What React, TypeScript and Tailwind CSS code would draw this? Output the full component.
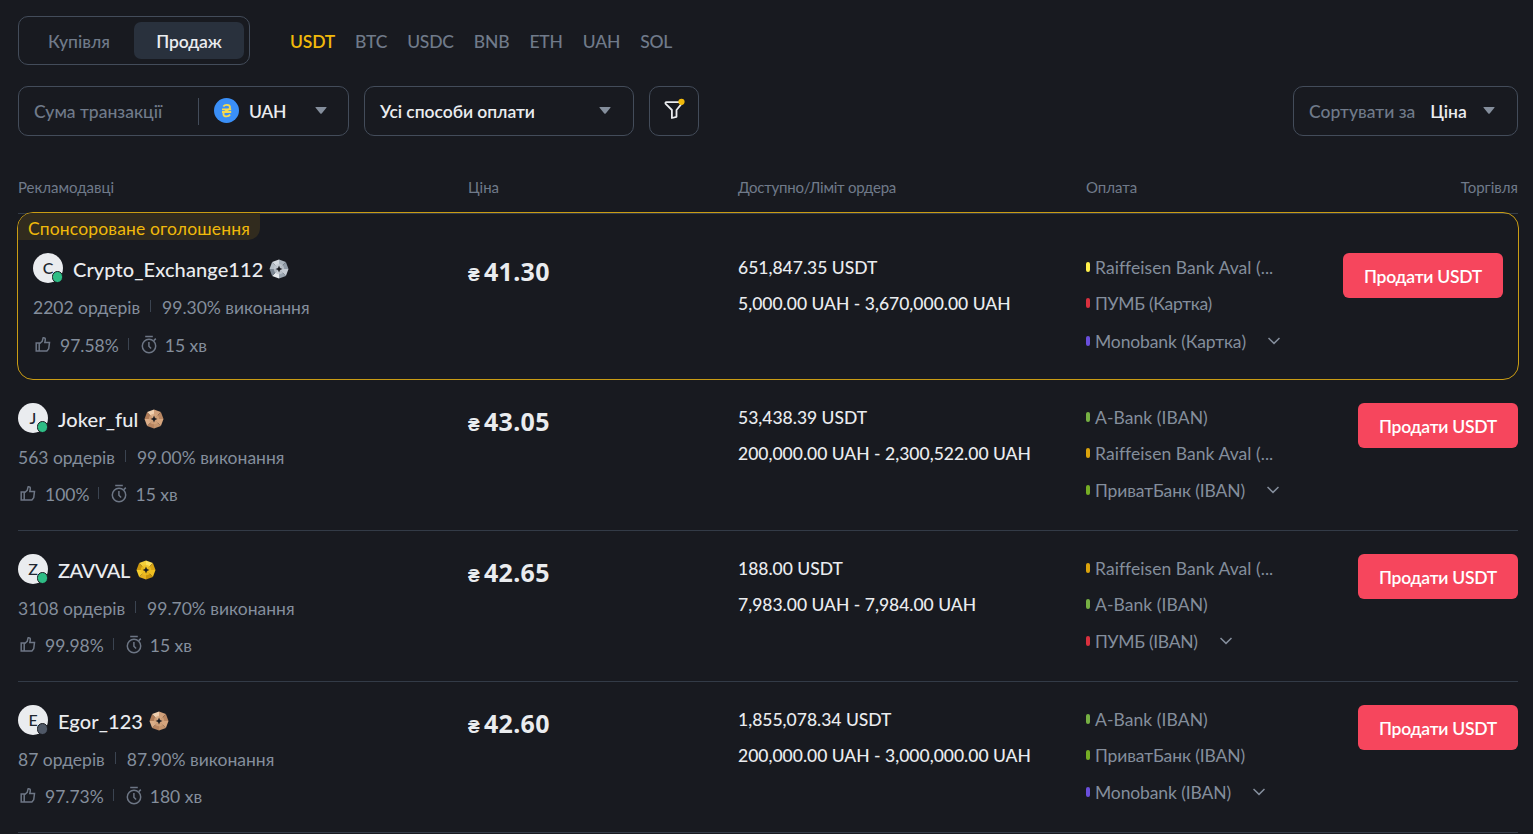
import clsx from "clsx";

type Tier = "silver" | "bronze" | "gold";

type Offer = {
  name: string;
  tier: Tier;
  online: boolean;
  orders: string;
  completion: string;
  rating: string;
  time: string;
  price: string;
  available: string;
  limit: string;
  methods: { label: string; color: string }[];
  sponsored?: boolean;
};

const coins = ["USDT", "BTC", "USDC", "BNB", "ETH", "UAH", "SOL"];

const offers: Offer[] = [
  {
    name: "Crypto_Exchange112",
    tier: "silver",
    online: true,
    orders: "2202 ордерів",
    completion: "99.30% виконання",
    rating: "97.58%",
    time: "15 хв",
    price: "41.30",
    available: "651,847.35 USDT",
    limit: "5,000.00 UAH - 3,670,000.00 UAH",
    methods: [
      { label: "Raiffeisen Bank Aval (...", color: "bg-[#fff04b]" },
      { label: "ПУМБ (Картка)", color: "bg-[#d9303e]" },
      { label: "Monobank (Картка)", color: "bg-[#6a4fdc]" },
    ],
    sponsored: true,
  },
  {
    name: "Joker_ful",
    tier: "bronze",
    online: true,
    orders: "563 ордерів",
    completion: "99.00% виконання",
    rating: "100%",
    time: "15 хв",
    price: "43.05",
    available: "53,438.39 USDT",
    limit: "200,000.00 UAH - 2,300,522.00 UAH",
    methods: [
      { label: "A-Bank (IBAN)", color: "bg-[#76b043]" },
      { label: "Raiffeisen Bank Aval (...", color: "bg-[#dba30c]" },
      { label: "ПриватБанк (IBAN)", color: "bg-[#75ad24]" },
    ],
  },
  {
    name: "ZAVVAL",
    tier: "gold",
    online: true,
    orders: "3108 ордерів",
    completion: "99.70% виконання",
    rating: "99.98%",
    time: "15 хв",
    price: "42.65",
    available: "188.00 USDT",
    limit: "7,983.00 UAH - 7,984.00 UAH",
    methods: [
      { label: "Raiffeisen Bank Aval (...", color: "bg-[#dba30c]" },
      { label: "A-Bank (IBAN)", color: "bg-[#76b043]" },
      { label: "ПУМБ (IBAN)", color: "bg-[#d9303e]" },
    ],
  },
  {
    name: "Egor_123",
    tier: "bronze",
    online: false,
    orders: "87 ордерів",
    completion: "87.90% виконання",
    rating: "97.73%",
    time: "180 хв",
    price: "42.60",
    available: "1,855,078.34 USDT",
    limit: "200,000.00 UAH - 3,000,000.00 UAH",
    methods: [
      { label: "A-Bank (IBAN)", color: "bg-[#76b043]" },
      { label: "ПриватБанк (IBAN)", color: "bg-[#75ad24]" },
      { label: "Monobank (IBAN)", color: "bg-[#6a4fdc]" },
    ],
  },
];

// Facet shades, clockwise from the top
const facets: Record<Tier, string[]> = {
  silver: ["#a9b3bd", "#8f9aa6", "#c3cad2", "#9aa5b0", "#e6eaee", "#7c8793", "#b4bdc6", "#d3d9df"],
  bronze: ["#d0a07a", "#b98762", "#d6a57d", "#c4946d", "#b98560", "#dcae88", "#b07c58", "#f0cfae"],
  gold: ["#fbe05e", "#d9a514", "#f0c020", "#c9940a", "#e5b020", "#f5cc2c", "#cc980e", "#f3cf3a"],
};

const rim = [
  [10, 0.5], [16.9, 3.1], [19.5, 10], [16.9, 16.9], [10, 19.5], [3.1, 16.9], [0.5, 10], [3.1, 3.1],
];

function labelTracking(label: string) {
  if (label.startsWith("Raiffeisen")) return "tracking-[0.05px]";
  if (label.startsWith("ПУМБ")) return "tracking-[-0.3px]";
  if (label.startsWith("A-Bank")) return "tracking-[0.07px]";
  return "tracking-[-0.12px]";
}

function TierGem({ tier }: { tier: Tier }) {
  return (
    <svg className="size-5" viewBox="0 0 20 20">
      {rim.map(([x, y], i) => {
        const [nx, ny] = rim[(i + 1) % rim.length];
        return <polygon key={i} points={`10,10 ${x},${y} ${nx},${ny}`} fill={facets[tier][i]} />;
      })}
      <circle cx="10" cy="10" r="5.2" fill={facets[tier][2]} opacity="0.75" />
      <path d="M10 6.6l1 2.4 2.4 1-2.4 1-1 2.4-1-2.4-2.4-1 2.4-1z" fill="#181a20" />
    </svg>
  );
}

function ThumbUp() {
  return (
    <svg className="h-[17px] w-4" viewBox="0 0 16 17" fill="none" stroke="currentColor" strokeWidth="1.5">
      <path d="M1.2 7h3v8h-3zM4.2 8l3-2.6.9-3.6c1.6-.3 2.4.6 2.2 2L9.8 6.6h4.7l-.8 6.2-1.8 2.2H4.2" />
    </svg>
  );
}

function Stopwatch() {
  return (
    <svg className="h-[19px] w-4" viewBox="0 0 16 19" fill="none" stroke="currentColor" strokeWidth="1.5">
      <circle cx="8" cy="11" r="6.7" />
      <path d="M4.2 1.4h7.6M12.8 5.6l2-2M7.9 7v4.2l2.2 2.3" />
    </svg>
  );
}

function HryvniaCoin() {
  return (
    <svg className="mb-px ml-[15px] size-[25px]" viewBox="0 0 25 25" fill="none">
      <circle cx="12.5" cy="12.5" r="12.5" fill="#3a8ff7" />
      <path
        d="M9.3 8.6c.8-1.2 2-1.8 3.5-1.8 2 0 3.2 1 3.2 2.5 0 3.6-6.6 2.9-6.6 6.6 0 1.5 1.2 2.5 3.2 2.5 1.6 0 2.8-.7 3.5-1.9M8 11.3h9.2M8 14h9.2"
        stroke="#f5d94e"
        strokeWidth="1.8"
      />
    </svg>
  );
}

function Caret() {
  return (
    <svg className="mb-px h-[7px] w-3" viewBox="0 0 12 7" fill="#848e9c">
      <path d="M1 0h10q1 0 .4.8L6.7 6.5q-.7.7-1.4 0L.6.8Q0 0 1 0z" />
    </svg>
  );
}

function OfferRow({ offer }: { offer: Offer }) {
  return (
    <div
      className={clsx(
        "relative flex items-start",
        offer.sponsored
          ? "-mx-px -mt-0.5 h-[168px] rounded-[16px] border border-[#c99c14] px-[15px] pt-10"
          : "h-[151px] border-b border-[#333b47] pt-[23px]",
      )}
    >
      {offer.sponsored && (
        <div className="absolute left-0 top-0 h-[27px] w-[242px] rounded-br-[12px] rounded-tl-[15px] bg-[#312b1e] pl-2.5 text-[17.5px] leading-[31px] tracking-[0.15px] text-[#f0b90b]">
          Спонсороване оголошення
        </div>
      )}

      <div className={offer.sponsored ? "w-[435px]" : "w-[450px]"}>
        <div className="flex h-[34px] items-start">
          <div className="relative size-[30px] shrink-0 rounded-full bg-[#eaecef] text-center text-base font-medium leading-[30px] text-[#202630]">
            {offer.name[0]}
            <span
              className={clsx(
                "absolute bottom-0 right-0 h-3 w-[11px] rounded-full border border-[#181a20]",
                offer.online ? "bg-[#2ebd85]" : "bg-[#4f5867]",
              )}
            />
          </div>
          <span
            className={clsx(
              "ml-2.5 mr-1.5 text-[20px] font-medium leading-[33px] text-[#eaecef]",
              offer.tier === "gold" ? "tracking-[-0.5px]" : "tracking-[0.1px]",
            )}
          >
            {offer.name}
          </span>
          <span className="mt-1.5">
            <TierGem tier={offer.tier} />
          </span>
        </div>
        <div className="mt-2.5 flex h-[22px] items-center">
          <span>{offer.orders}</span>
          <span className="mb-1 ml-2.5 mr-[11px] h-3 w-px bg-[#3b4451]" />
          <span>{offer.completion}</span>
        </div>
        <div className={clsx("flex h-[22px] items-center", offer.sponsored ? "mt-4" : "mt-[15px]")}>
          <span className="mb-1 ml-0.5 mr-[9px] text-[#6d7685]">
            <ThumbUp />
          </span>
          <span>{offer.rating}</span>
          <span className="mb-1 ml-[9px] mr-3 h-3 w-px bg-[#3b4451]" />
          <span className="mb-1 mr-2 text-[#6d7685]">
            <Stopwatch />
          </span>
          <span>{offer.time}</span>
        </div>
      </div>

      <div className="-mt-px flex h-[38px] w-[270px] items-baseline text-[#eaecef]">
        <span className="w-4 font-['Liberation_Sans',sans-serif] text-[17.5px] font-bold">₴</span>
        <span className="font-['Noto_Sans',sans-serif] text-[25px] font-bold leading-[38px] tracking-[0.3px]">
          {offer.price}
        </span>
      </div>

      <div className="-mt-[3px] w-[348px] font-medium leading-9 text-[#eaecef]">
        <p>{offer.available}</p>
        <p>{offer.limit}</p>
      </div>

      <div className="-mt-[3px] leading-9">
        {offer.methods.map((method, i) => (
          <div
            key={method.label}
            className={clsx("flex h-9 items-center", i === 2 && (offer.sponsored ? "mt-0.5" : "mt-px"))}
          >
            <span className={clsx("mb-[3px] mr-[5px] h-2.5 w-1 rounded-[2px]", method.color)} />
            <span className={labelTracking(method.label)}>{method.label}</span>
            {i === 2 && (
              <svg className="mb-0.5 ml-[22px] h-2 w-3" viewBox="0 0 12 8" fill="none" stroke="#848e9c" strokeWidth="1.5">
                <path d="M.5 1l5.5 5.4L11.5 1" />
              </svg>
            )}
          </div>
        ))}
      </div>

      <button className="ml-auto h-[45px] w-40 rounded-[6px] bg-[#f6465d] pt-0.5 font-semibold tracking-[-0.25px] text-white">
        Продати USDT
      </button>
    </div>
  );
}

export default function App() {
  return (
    <div className="h-[834px] w-[1533px] overflow-hidden bg-[#181a20] pl-[18px] pr-[15px] pt-4 font-['Lato','Noto_Sans',sans-serif] text-[17.5px] leading-[22px] text-[#848e9c]">
      <div className="flex items-center">
        <div className="flex h-[49px] w-[232px] items-center rounded-[10px] border border-[#434c5a] p-[5px] text-center font-medium">
          <button className="h-[37px] w-[110px] pt-0.5 text-[#707a8a]">Купівля</button>
          <button className="h-[37px] w-[110px] rounded-[7px] bg-[#29313d] pt-0.5 font-semibold tracking-[-0.15px] text-[#eaecef]">
            Продаж
          </button>
        </div>
        <div className="ml-10 flex gap-5 pt-[3px] font-medium tracking-[-0.18px] text-[#707a8a]">
          {coins.map((coin) => (
            <span key={coin} className={clsx(coin === "USDT" && "font-semibold text-[#f0b90b]")}>
              {coin}
            </span>
          ))}
        </div>
      </div>

      <div className="mt-[21px] flex h-[50px] font-semibold tracking-[-0.05px] text-[#eaecef]">
        <div className="flex w-[331px] items-center rounded-[10px] border border-[#434c5a] pl-[15px]">
          <span className="w-[164px] pt-0.5 font-medium tracking-normal text-[#707a8a]">Сума транзакції</span>
          <span className="h-[27px] w-px bg-[#434c5a]" />
          <HryvniaCoin />
          <span className="ml-2.5 w-[66px] pt-0.5 tracking-[-0.3px]">UAH</span>
          <Caret />
        </div>
        <div className="ml-[15px] flex w-[270px] items-center rounded-[10px] border border-[#434c5a] pl-[15px]">
          <span className="w-[219px] pt-0.5">Усі способи оплати</span>
          <Caret />
        </div>
        <button className="ml-[15px] flex w-[50px] items-center justify-center rounded-[10px] border border-[#434c5a]">
          <svg className="mb-1 size-[22px]" viewBox="0 0 22 22" fill="none">
            <path
              d="M3.5 4.2h14.2c1 0 1.4.9.8 1.7l-5 6.1v6.8l-4.6 1.2v-8L2.7 5.900c-.6-.8-.2-1.700.8-1.700z"
              stroke="#eaecef"
              strokeWidth="1.8"
              strokeLinejoin="round"
            />
            <circle cx="18.5" cy="3.8" r="3.1" fill="#f0b90b" />
          </svg>
        </button>
        <div className="ml-auto flex w-[225px] items-center rounded-[10px] border border-[#434c5a] pl-[15px]">
          <span className="mr-[15px] pt-0.5 font-medium tracking-normal text-[#707a8a]">Сортувати за</span>
          <span className="w-[53px] pt-0.5">Ціна</span>
          <Caret />
        </div>
      </div>

      <div className="flex h-[78px] items-center border-b border-[#333b47] pt-[25px] text-[15px] text-[#707a8a]">
        <span className="w-[450px]">Рекламодавці</span>
        <span className="w-[270px]">Ціна</span>
        <span className="w-[348px] tracking-[-0.25px]">Доступно/Ліміт ордера</span>
        <span>Оплата</span>
        <span className="ml-auto">Торгівля</span>
      </div>

      {offers.map((offer) => (
        <OfferRow key={offer.name} offer={offer} />
      ))}
    </div>
  );
}
